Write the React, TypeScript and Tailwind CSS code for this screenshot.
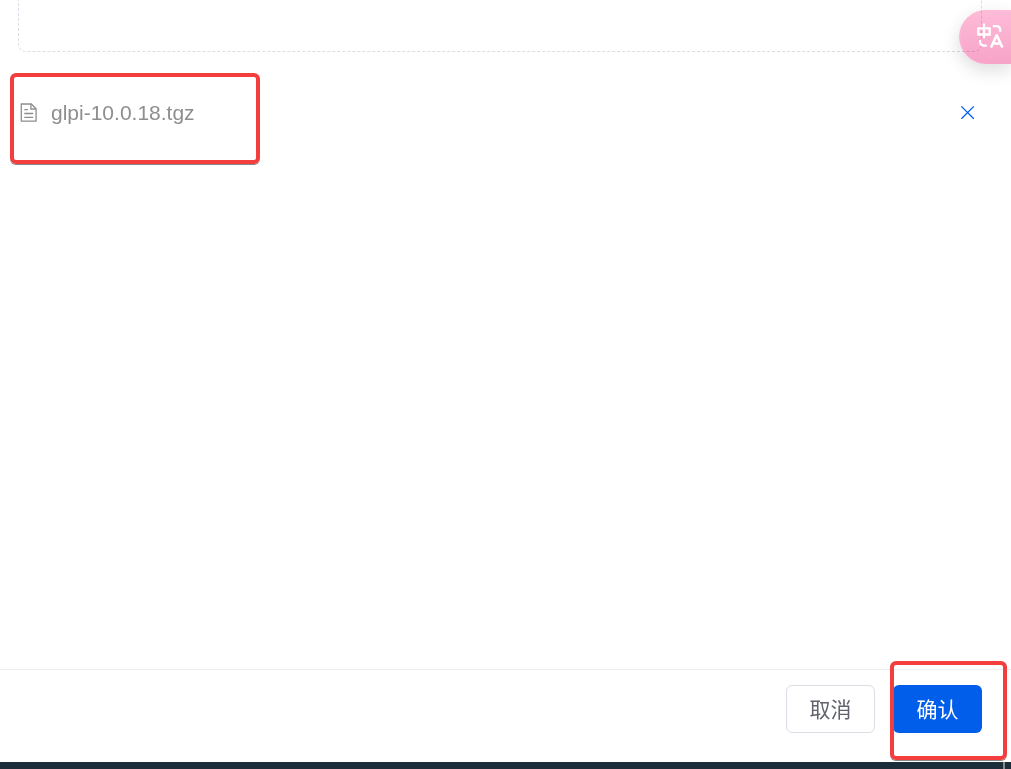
function FileIcon() {
  return (
    <svg className="size-[21px] shrink-0" viewBox="0 0 21 21" fill="none" stroke="#8e8e8e" strokeWidth="1.3" aria-hidden="true">
      <path d="M3.3 2h10l4.8 4.8v12.4H3.3z" />
      <path d="M12.9 2v5h5M6.3 7.6h3.6M6.3 11.5h8.9M6.3 15.3h8.9" />
    </svg>
  );
}

function CloseIcon() {
  return (
    <svg className="size-[21px]" viewBox="0 0 21 21" fill="none" stroke="#005eeb" strokeWidth="1.3" aria-hidden="true">
      <path d="M4.4 4.4l12.4 12.4M16.8 4.4L4.4 16.8" />
    </svg>
  );
}

function TranslateIcon() {
  return (
    <svg className="relative size-7" viewBox="0 0 28 28" fill="none" stroke="#fff" strokeWidth="2.3" aria-hidden="true">
      <path d="M2.3 5.3h11.4v6.2H2.3zM8 0.4v14.8" />
      <path d="M16.8 3.1h3.4q4 0 4 4v1.7M4.2 17v1.4q0 4.2 4.2 4.2h2.4" />
      <path d="M15 24.6l5.5-12.2h.4l5.5 12.2M16.8 20.6h7.8" strokeWidth="2.5" />
    </svg>
  );
}

export default function App() {
  return (
    <div className="flex min-h-screen flex-col overflow-hidden bg-white font-['Liberation_Sans','Noto_Sans_CJK_SC',sans-serif] text-[21px]">
      <main className="flex-1 pr-[29px] pl-[18px]">
        <div className="h-[52px] rounded-b-lg border border-t-0 border-dashed border-[#dddce6]" />
        <div className="relative mt-10 flex h-[41px] items-center gap-3">
          <FileIcon />
          <span className="flex-1 text-[#8e8e8e]">glpi-10.0.18.tgz</span>
          <button type="button" aria-label="移除文件" className="mr-1">
            <CloseIcon />
          </button>
          <div className="pointer-events-none absolute -top-[19px] -left-2 h-[91px] w-[250px] rounded-md border-4 border-[#f43d3d] shadow-[0_1px_0_#888]" />
        </div>
      </main>

      <footer className="flex justify-end gap-[18px] border-t border-[#ededf0] pt-[15px] pr-[29px] pb-[29px]">
        <button type="button" className="h-12 w-[89px] rounded-md border border-[#dcdde5] bg-white pt-0.5 text-[#60636d]">
          取消
        </button>
        <div className="relative">
          <button type="button" className="h-12 w-[89px] rounded-md bg-[#005eeb] pt-0.5 text-white">
            确认
          </button>
          <div className="pointer-events-none absolute -top-6 -left-[3px] h-[99px] w-[117px] rounded-md border-4 border-[#f43d3d] shadow-[0_1px_0_#888]" />
        </div>
      </footer>
      <div className="flex h-[7px] justify-end bg-[#1c2d3a] pr-1.5">
        <div className="w-0.5 bg-[#858b91]" />
      </div>

      <button
        type="button"
        aria-label="翻译"
        className="absolute top-2.5 right-0 flex h-[54px] w-[52px] items-center pl-[17px]"
      >
        <span className="absolute inset-0 rounded-l-full border-l-2 border-[#fbb4d2] bg-linear-to-b from-[#ffbbd8] to-[#f6a4c8] mix-blend-multiply shadow-[0_6px_18px_rgba(0,0,0,0.14)]" />
        <TranslateIcon />
      </button>
    </div>
  );
}
